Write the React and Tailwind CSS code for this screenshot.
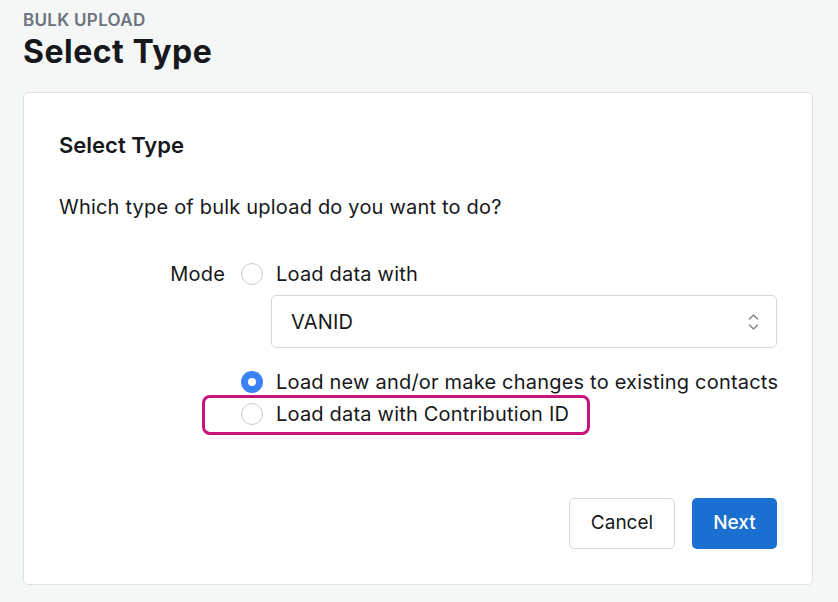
function Radio({ checked }) {
    return checked ? (
        <span className="flex h-[22px] w-[22px] shrink-0 items-center justify-center rounded-full bg-[#3b82f6]">
            <span className="h-[8px] w-[8px] rounded-full bg-white" />
        </span>
    ) : (
        <span className="h-[22px] w-[22px] shrink-0 rounded-full border border-[#c9cccf] bg-white" />
    );
}

// little up/down caret like the native select
function Caret() {
    return (
        <svg width="11" height="18" viewBox="0 0 11 18" fill="none" stroke="#7b838b" strokeWidth="1.4" strokeLinecap="round" strokeLinejoin="round">
            <path d="M1.5 6 L5.5 2 L9.5 6" />
            <path d="M1.5 12 L5.5 16 L9.5 12" />
        </svg>
    );
}

export default function App() {
    return (
        <div className="min-h-screen bg-[#f5f6f6] px-[23px] pt-[9px] text-[#16181b]" style={{ fontFamily: 'Inter, "Liberation Sans", sans-serif' }}>
            <div className="text-[17px] font-semibold leading-[22px] tracking-[0.3px] text-[#6b737c]">BULK UPLOAD</div>
            <h1 className="text-[32px] font-bold leading-[42px] tracking-[0.5px]">Select Type</h1>

            {/* Card */}
            <div className="mt-[19px] h-[493px] w-[790px] rounded-[5px] border border-[#dfe2e4] bg-white px-[35px] pt-[38px]">
                <h2 className="text-[22px] font-semibold leading-[28px]">Select Type</h2>
                <p className="mt-[35px] text-[20px] leading-[26px] tracking-[0.2px]">Which type of bulk upload do you want to do?</p>

                <div className="mt-[41px] flex whitespace-nowrap text-[20px] leading-[26px] tracking-[0.2px]">
                    <div className="w-[166px] shrink-0 text-right">Mode</div>
                    <div className="ml-[16px] min-w-0 flex-1">
                        <label className="flex items-center gap-[13px]">
                            <Radio />
                            <span>Load data with</span>
                        </label>
                        <div className="ml-[30px] mt-[8px] flex h-[53px] items-center justify-between rounded-[5px] border border-[#d6d9dc] pl-[19px] pr-[17px]">
                            <span>VANID</span>
                            <Caret />
                        </div>
                        <label className="mt-[21px] flex items-center gap-[13px]">
                            <Radio checked />
                            <span>Load new and/or make changes to existing contacts</span>
                        </label>
                        <div className="relative mt-[6px]">
                            <label className="flex items-center gap-[13px]">
                                <Radio />
                                <span>Load data with Contribution ID</span>
                            </label>
                            <div className="absolute left-[-39px] top-[-6px] h-[40px] w-[388px] rounded-[8px] border-[3px] border-[#c8157e]" />
                        </div>
                    </div>
                </div>

                <div className="mt-[71px] flex justify-end gap-[17px]">
                    <button className="h-[51px] w-[106px] rounded-[5px] border border-[#d6d9dc] bg-white text-[19px]">Cancel</button>
                    <button className="h-[51px] w-[85px] rounded-[5px] bg-[#1a6fd0] text-[19px] font-medium text-white">Next</button>
                </div>
            </div>
        </div>
    );
}
